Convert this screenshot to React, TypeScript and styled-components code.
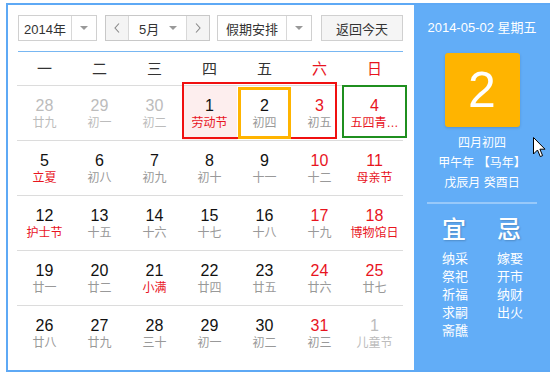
import React from "react";
import styled, { createGlobalStyle } from "styled-components";

const RED = "#e8141e";
const BLUE = "#62adf7";

type Day = { d: number; l: string; faded?: boolean; redNum?: boolean; redLunar?: boolean; tint?: boolean };

const weeks: Day[][] = [
    [
        { d: 28, l: "廿九", faded: true },
        { d: 29, l: "初一", faded: true },
        { d: 30, l: "初二", faded: true },
        { d: 1, l: "劳动节", redLunar: true, tint: true },
        { d: 2, l: "初四" },
        { d: 3, l: "初五", redNum: true },
        { d: 4, l: "五四青…", redNum: true, redLunar: true },
    ],
    [
        { d: 5, l: "立夏", redLunar: true },
        { d: 6, l: "初八" },
        { d: 7, l: "初九" },
        { d: 8, l: "初十" },
        { d: 9, l: "十一" },
        { d: 10, l: "十二", redNum: true },
        { d: 11, l: "母亲节", redNum: true, redLunar: true },
    ],
    [
        { d: 12, l: "护士节", redLunar: true },
        { d: 13, l: "十五" },
        { d: 14, l: "十六" },
        { d: 15, l: "十七" },
        { d: 16, l: "十八" },
        { d: 17, l: "十九", redNum: true },
        { d: 18, l: "博物馆日", redNum: true, redLunar: true },
    ],
    [
        { d: 19, l: "廿一" },
        { d: 20, l: "廿二" },
        { d: 21, l: "小满", redLunar: true },
        { d: 22, l: "廿四" },
        { d: 23, l: "廿五" },
        { d: 24, l: "廿六", redNum: true },
        { d: 25, l: "廿七", redNum: true },
    ],
    [
        { d: 26, l: "廿八" },
        { d: 27, l: "廿九" },
        { d: 28, l: "三十" },
        { d: 29, l: "初一" },
        { d: 30, l: "初二" },
        { d: 31, l: "初三", redNum: true },
        { d: 1, l: "儿童节", faded: true },
    ],
];

const weekdays = ["一", "二", "三", "四", "五", "六", "日"];
const good = ["纳采", "祭祀", "祈福", "求嗣", "斋醮"];
const bad = ["嫁娶", "开市", "纳财", "出火"];

const Caret = () => (
    <svg width="8" height="4" viewBox="0 0 8 4">
        <path d="M0 0H8L4 4Z" fill="#999" />
    </svg>
);

const Chevron: React.FC<{ dir: "left" | "right" }> = ({ dir }) => (
    <svg width="6" height="10" viewBox="0 0 6 10">
        <polyline
            points={dir === "left" ? "5,0.5 1,5 5,9.5" : "1,0.5 5,5 1,9.5"}
            fill="none"
            stroke="#888"
            strokeWidth="1.1"
        />
    </svg>
);

export default function App() {
    return (
        <>
            <GlobalStyle />
            <Widget>
                <Main>
                    <Toolbar>
                        <Select $width={79}>
                            <SelectText>2014年</SelectText>
                            <SelectArrow>
                                <Caret />
                            </SelectArrow>
                        </Select>
                        <MonthGroup>
                            <StepButton>
                                <Chevron dir="left" />
                            </StepButton>
                            <MonthField>
                                <span>5月</span>
                                <Caret />
                            </MonthField>
                            <StepButton>
                                <Chevron dir="right" />
                            </StepButton>
                        </MonthGroup>
                        <Select $width={95}>
                            <SelectText>假期安排</SelectText>
                            <SelectArrow>
                                <Caret />
                            </SelectArrow>
                        </Select>
                        <TodayButton>返回今天</TodayButton>
                    </Toolbar>
                    <BlueRule />
                    <WeekHeader>
                        {weekdays.map((w, i) => (
                            <WeekdayLabel key={w} $red={i >= 5}>
                                {w}
                            </WeekdayLabel>
                        ))}
                    </WeekHeader>
                    {weeks.map((week, wi) => (
                        <WeekRow key={wi} $last={wi === weeks.length - 1}>
                            {week.map((day, di) => (
                                <DayCell key={di} $tint={day.tint}>
                                    <DayNum $faded={day.faded} $red={day.redNum}>
                                        {day.d}
                                    </DayNum>
                                    <Lunar $faded={day.faded} $red={day.redLunar}>
                                        {day.l}
                                    </Lunar>
                                </DayCell>
                            ))}
                            {wi === 0 && (
                                <>
                                    <Frame $color="#f01010" $w={2} style={{ left: 165, top: -4, width: 155, height: 57 }} />
                                    <Frame $color="#ffb400" $w={3} style={{ left: 221, top: 1, width: 53, height: 52 }} />
                                    <Frame $color="#1f8f1f" $w={2} style={{ left: 325, top: -1, width: 65, height: 53 }} />
                                </>
                            )}
                        </WeekRow>
                    ))}
                </Main>
                <Panel>
                    <PanelDate>2014-05-02 星期五</PanelDate>
                    <BigDay>2</BigDay>
                    <LunarInfo>
                        <div>四月初四</div>
                        <div>甲午年 【马年】</div>
                        <div>戊辰月 癸酉日</div>
                    </LunarInfo>
                    <PanelRule />
                    <Almanac>
                        <AlmanacCol>
                            <AlmanacHead>宜</AlmanacHead>
                            {good.map(g => (
                                <AlmanacItem key={g}>{g}</AlmanacItem>
                            ))}
                        </AlmanacCol>
                        <AlmanacCol>
                            <AlmanacHead>忌</AlmanacHead>
                            {bad.map(b => (
                                <AlmanacItem key={b}>{b}</AlmanacItem>
                            ))}
                        </AlmanacCol>
                    </Almanac>
                    <Cursor width="13" height="21" viewBox="0 0 13 21">
                        <path d="M0.5 0.5V17L4.5 13L7.3 19.6L9.6 18.6L6.9 12.2H12Z" fill="#fff" stroke="#000" strokeWidth="1" />
                    </Cursor>
                </Panel>
            </Widget>
        </>
    );
}

const GlobalStyle = createGlobalStyle`
    body {
        margin: 0;
        background: #fff;
        font-family: "Liberation Sans", "Noto Sans CJK SC", sans-serif;
        color: #333;
    }
`;

const Widget = styled.div`
    display: flex;
    width: 544px;
    height: 365px;
    margin: 3px 0 0 6px;
    border: 2px solid #5ea9f5;
    border-right: none;
`;

const Main = styled.div`
    width: 406px;
    box-sizing: border-box;
    padding: 10px 0 0 9px;
    background: #fff;
`;

const Toolbar = styled.div`
    display: flex;
    height: 26px;
    margin-left: 1px;
    font-size: 13px;
    color: #333;
`;

const Select = styled.div<{ $width: number }>`
    display: flex;
    width: ${p => p.$width}px;
    height: 26px;
    box-sizing: border-box;
    border: 1px solid #d0d0d0;
    background: #fff;
    margin-right: 8px;
`;

const SelectText = styled.div`
    flex: 1;
    display: flex;
    align-items: center;
    justify-content: center;
`;

const SelectArrow = styled.div`
    width: 24px;
    display: flex;
    align-items: center;
    justify-content: center;
    border-left: 1px solid #d8d8d8;
`;

const MonthGroup = styled.div`
    display: flex;
    width: 105px;
    height: 26px;
    box-sizing: border-box;
    border: 1px solid #c8c8c8;
    margin-right: 7px;
`;

const StepButton = styled.div`
    width: 22px;
    display: flex;
    align-items: center;
    justify-content: center;
    background: #f4f4f4;
    &:first-child {
        border-right: 1px solid #d8d8d8;
    }
    &:last-child {
        border-left: 1px solid #d8d8d8;
    }
`;

const MonthField = styled.div`
    flex: 1;
    display: flex;
    align-items: center;
    justify-content: space-between;
    padding: 0 9px 0 10px;
    background: #fff;
`;

const TodayButton = styled.div`
    width: 82px;
    height: 26px;
    box-sizing: border-box;
    margin-left: 1px;
    border: 1px solid #d0d0d0;
    background: #f5f5f5;
    display: flex;
    align-items: center;
    justify-content: center;
`;

const BlueRule = styled.div`
    height: 1px;
    width: 385px;
    margin: 10px 0 0 1px;
    background: #78b7f2;
`;

const WeekHeader = styled.div`
    display: grid;
    grid-template-columns: repeat(7, 55px);
    height: 33px;
    width: 386px;
    border-bottom: 1px solid #dcdcdc;
    align-items: center;
`;

const WeekdayLabel = styled.div<{ $red?: boolean }>`
    text-align: center;
    font-size: 15px;
    margin-top: -2px;
    color: ${p => (p.$red ? RED : "#333")};
`;

const WeekRow = styled.div<{ $last?: boolean }>`
    position: relative;
    display: grid;
    grid-template-columns: repeat(7, 55px);
    width: 386px;
    height: 54px;
    border-bottom: ${p => (p.$last ? "none" : "1px solid #dcdcdc")};
`;

const DayCell = styled.div<{ $tint?: boolean }>`
    display: flex;
    flex-direction: column;
    align-items: center;
    padding-top: 10px;
    background: ${p => (p.$tint ? "#fdeeee" : "transparent")};
    min-width: 0;
`;

const DayNum = styled.div<{ $faded?: boolean; $red?: boolean }>`
    font-size: 16px;
    line-height: 20px;
    color: ${p => (p.$faded ? "#bcbcbc" : p.$red ? RED : "#111")};
`;

const Lunar = styled.div<{ $faded?: boolean; $red?: boolean }>`
    font-size: 12px;
    line-height: 14px;
    white-space: nowrap;
    color: ${p => (p.$faded ? "#bcbcbc" : p.$red ? RED : "#999")};
`;

const Frame = styled.div<{ $color: string; $w: number }>`
    position: absolute;
    box-sizing: border-box;
    border: ${p => p.$w}px solid ${p => p.$color};
    pointer-events: none;
`;

const Panel = styled.div`
    position: relative;
    width: 136px;
    background: ${BLUE};
    color: #fff;
    display: flex;
    flex-direction: column;
    align-items: center;
`;

const PanelDate = styled.div`
    margin-top: 14px;
    font-size: 13px;
    line-height: 18px;
`;

const BigDay = styled.div`
    margin-top: 16px;
    width: 75px;
    height: 74px;
    border-radius: 3px;
    background: #ffb400;
    box-shadow: 0 1px 3px rgba(0, 0, 0, 0.15);
    display: flex;
    align-items: center;
    justify-content: center;
    font-size: 50px;
    color: #fff;
`;

const LunarInfo = styled.div`
    margin-top: 6px;
    font-size: 12px;
    line-height: 20px;
    text-align: center;
`;

const PanelRule = styled.div`
    width: 110px;
    height: 2px;
    margin-top: 9px;
    background: rgba(255, 255, 255, 0.35);
`;

const Almanac = styled.div`
    display: flex;
    gap: 29px;
    width: 100%;
    box-sizing: border-box;
    padding-left: 28px;
    margin-top: 12px;
`;

const AlmanacCol = styled.div`
    display: flex;
    flex-direction: column;
`;

const AlmanacHead = styled.div`
    font-size: 24px;
    line-height: 28px;
    font-weight: 500;
    margin-bottom: 6px;
    text-shadow: 1px 1px 2px rgba(0, 0, 0, 0.2);
`;

const AlmanacItem = styled.div`
    font-size: 13px;
    line-height: 18px;
`;

const Cursor = styled.svg`
    position: absolute;
    left: 119px;
    top: 132px;
`;
